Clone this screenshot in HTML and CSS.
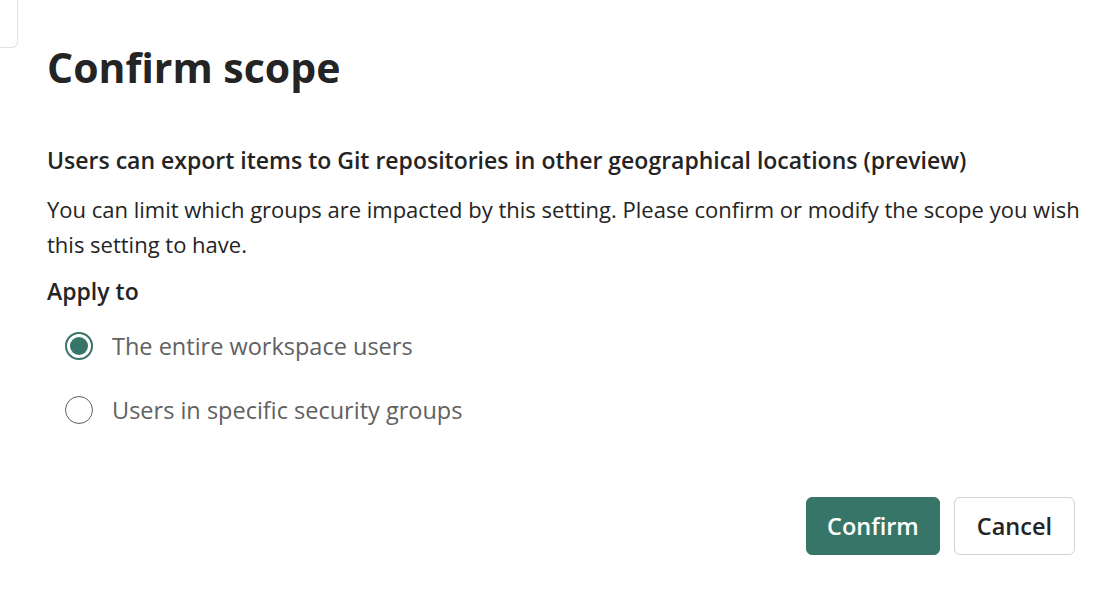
FILE: index.html
```html
<!DOCTYPE html>
<html>
<head>
    <meta charset="UTF-8">
    <title>Confirm scope</title>
    <link rel="stylesheet" href="styles.css">
</head>
<body>
    <div class="tab-edge"></div>
    <main class="dialog">
        <h1 class="title">Confirm scope</h1>
        <h2 class="setting">Users can export items to Git repositories in other geographical locations (preview)</h2>
        <p class="desc">You can limit which groups are impacted by this setting. Please confirm or modify the scope you wish this setting to have.</p>
        <h3 class="apply">Apply to</h3>
        <div class="options">
            <label class="option">
                <span class="radio checked"></span>
                <span class="option-text">The entire workspace users</span>
            </label>
            <label class="option">
                <span class="radio"></span>
                <span class="option-text">Users in specific security groups</span>
            </label>
        </div>
        <div class="actions">
            <button class="btn primary">Confirm</button>
            <button class="btn">Cancel</button>
        </div>
    </main>
</body>
</html>
```

FILE: styles.css
```css
body {
    margin: 0;
    font-family: "Open Sans", "Noto Sans", sans-serif;
    color: #242424;
    background: #fff;
    position: relative;
}

.tab-edge {
    position: absolute;
    left: 0;
    top: 0;
    width: 17px;
    height: 47px;
    border-right: 1px solid #e0e0e0;
    border-bottom: 1px solid #e0e0e0;
    border-bottom-right-radius: 6px;
}

.dialog {
    padding: 40px 14px 0 47px;
}

.title {
    font-size: 41px;
    font-weight: 700;
    margin: 0 0 51px;
    line-height: 54px;
}

.setting {
    font-size: 23px;
    font-weight: 600;
    margin: 0 0 17px;
    line-height: 30px;
}

.desc {
    font-size: 22px;
    line-height: 35px;
    margin: 0 0 11px;
}

.apply {
    font-size: 23px;
    font-weight: 600;
    margin: 0;
    line-height: 36px;
}

.options {
    padding-left: 18px;
    margin-top: 5px;
}

.option {
    display: flex;
    align-items: center;
    gap: 19px;
    height: 64px;
    color: #616161;
    font-size: 23.5px;
}

.radio {
    width: 28px;
    height: 28px;
    box-sizing: border-box;
    border: 1.5px solid #616161;
    border-radius: 50%;
    display: flex;
    align-items: center;
    justify-content: center;
}

.radio.checked {
    border: 2px solid #367567;
}

.radio.checked::after {
    content: "";
    width: 18px;
    height: 18px;
    border-radius: 50%;
    background: #367567;
}

.actions {
    display: flex;
    justify-content: flex-end;
    gap: 14px;
    margin-top: 55px;
    padding-right: 13px;
}

.btn {
    height: 58px;
    padding: 0 22px;
    font-family: inherit;
    font-size: 23.5px;
    font-weight: 600;
    border: 1px solid #d1d1d1;
    border-radius: 6px;
    background: #fff;
    color: #242424;
}

.btn.primary {
    padding: 0 20px;
    background: #367567;
    border-color: #367567;
    color: #fff;
}
```
